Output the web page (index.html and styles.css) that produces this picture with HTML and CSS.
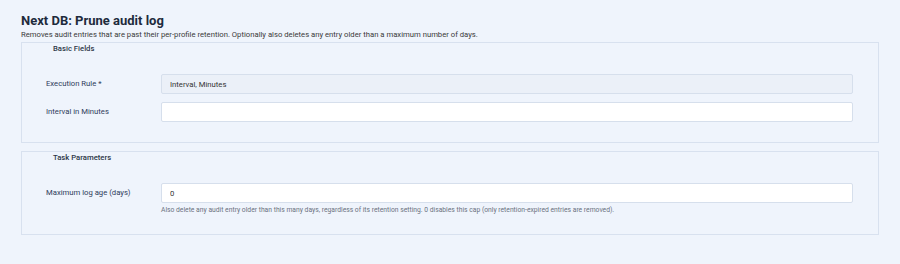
FILE: index.html
```html
<!DOCTYPE html>
<html lang="en">
<head>
    <meta charset="UTF-8">
    <meta name="viewport" content="width=device-width, initial-scale=1.0">
    <title>Next DB: Prune audit log</title>
<link rel="stylesheet" href="styles.css">
</head>
<body>

<div id="task-page">

    <h2 class="task-title">Next DB: Prune audit log</h2>
    <p class="task-desc">Removes audit entries that are past their per-profile retention. Optionally also deletes any entry older than a maximum number of days.</p>

    <div class="field-group group-basic">
        <div class="group-legend">Basic Fields</div>
        <div class="field-row">
            <label class="field-label">Execution Rule *</label>
            <div class="field-control">
                <input class="field-input readonly" type="text" value="Interval, Minutes" readonly>
            </div>
        </div>
        <div class="field-row">
            <label class="field-label">Interval in Minutes</label>
            <div class="field-control">
                <input class="field-input" type="text" value="">
            </div>
        </div>
    </div>

    <div class="field-group group-params">
        <div class="group-legend">Task Parameters</div>
        <div class="field-row">
            <label class="field-label">Maximum log age (days)</label>
            <div class="field-control">
                <input class="field-input" type="text" value="0">
                <div class="field-help">Also delete any audit entry older than this many days, regardless of its retention setting. 0 disables this cap (only retention-expired entries are removed).</div>
            </div>
        </div>
    </div>

</div>

</body>
</html>
```

FILE: styles.css
```css
html, body {
    margin: 0;
    padding: 0;
    background-color: #EFF4FC;
}
#task-page {
    padding: 13px 21px 0 21px;
    font-family: Roboto, "Liberation Sans", sans-serif;
    color: #333;
}
.task-title {
    margin: 0;
    font-size: 13px;
    line-height: 16px;
    font-weight: bold;
    color: #1E2B3C;
}
.task-desc {
    margin: 1px 0 3px 0;
    font-size: 7.7px;
    line-height: 9px;
    color: #3A3A3A;
}
.field-group {
    border: 1px solid #D8E1EF;
    padding: 2px 25px 20px 24px;
}
.group-params {
    margin-top: 8px;
}
.group-legend {
    padding-left: 7px;
    font-size: 7.7px;
    line-height: 8px;
    font-weight: 500;
    color: #2D3748;
}
.field-row {
    display: grid;
    grid-template-columns: 115px 1fr;
    margin-top: 8px;
}
.group-legend + .field-row {
    margin-top: 21px;
}
.field-label {
    padding-top: 5px;
    font-size: 7.7px;
    line-height: 9px;
    color: #2E3B5B;
}
.field-input {
    box-sizing: border-box;
    display: block;
    width: 100%;
    height: 20px;
    margin: 0;
    padding: 0 8px;
    border: 1px solid #D6DFEC;
    border-radius: 2px;
    background-color: #FFF;
    font-family: Roboto, "Liberation Sans", sans-serif;
    font-size: 7.7px;
    color: #333;
    outline: none;
}
.field-input.readonly {
    background-color: #EBF0F8;
}
.field-help {
    margin-top: 3px;
    font-size: 6.75px;
    line-height: 8px;
    color: #6B7280;
}
```
